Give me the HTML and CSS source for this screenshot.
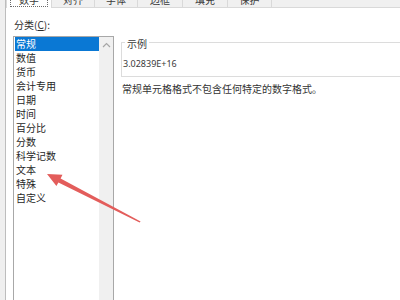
FILE: index.html
```html
<!DOCTYPE html>
<html lang="zh-CN">
<head>
<meta charset="utf-8">
<title>设置单元格格式</title>
<link rel="stylesheet" href="styles.css">
</head>
<body>
<div class="dialog">
  <div class="edge"></div>
  <div class="main">
    <div class="tabs">
      <div class="tab sel w46"><span>数字</span></div>
      <div class="tab w43"><span>对齐</span></div>
      <div class="tab w43"><span>字体</span></div>
      <div class="tab w45"><span>边框</span></div>
      <div class="tab w45"><span>填充</span></div>
      <div class="tab w44"><span>保护</span></div>
      <div class="tabs-fill"></div>
    </div>
    <div class="page">
      <div class="left">
        <div class="label">分类(<u>C</u>):</div>
        <div class="listbox">
          <ul class="items">
            <li class="selected">常规</li>
            <li>数值</li>
            <li>货币</li>
            <li>会计专用</li>
            <li>日期</li>
            <li>时间</li>
            <li>百分比</li>
            <li>分数</li>
            <li>科学记数</li>
            <li>文本</li>
            <li>特殊</li>
            <li>自定义</li>
          </ul>
          <div class="scroll">
            <svg class="chev" width="9" height="6" viewBox="0 0 9 6"><path d="M1 5 L4.5 1.5 L8 5" fill="none" stroke="#a6a6a6" stroke-width="1.2"/></svg>
          </div>
        </div>
      </div>
      <div class="right">
        <fieldset class="sample">
          <legend>示例</legend>
          <div class="value">3.02839E+16</div>
        </fieldset>
        <p class="desc">常规单元格格式不包含任何特定的数字格式。</p>
      </div>
    </div>
  </div>
  <svg class="arrow" width="400" height="300" viewBox="0 0 400 300">
    <polygon points="47,174 62.5,174.8 60.6,178.4 140.6,221.4 139.6,222.6 58.4,182.4 56.4,186" fill="#e35d5b"/>
  </svg>
</div>
</body>
</html>
```

FILE: styles.css
```css
html, body {
  margin: 0;
  padding: 0;
  width: 400px;
  height: 300px;
  overflow: hidden;
  background: #ffffff;
}

.dialog {
  display: flex;
  height: 300px;
  font-family: "Noto Sans CJK SC", "Noto Sans", sans-serif;
  font-size: 10px;
  color: #2b2b2b;
}

.edge {
  width: 5px;
  flex: 0 0 5px;
  background: #efefef;
  border-right: 1px solid #bdbdbd;
}

.main {
  flex: 1;
  display: flex;
  flex-direction: column;
  overflow: hidden;
}

.tabs {
  display: flex;
  height: 8px;
  flex: 0 0 8px;
  overflow: hidden;
  background: #f0f0f0;
}

.tab {
  box-sizing: border-box;
  height: 8px;
  overflow: hidden;
  border-right: 1px solid #d9d9d9;
  border-bottom: 1px solid #d9d9d9;
  text-align: center;
  color: #3a3a3a;
}

.tab span {
  display: block;
  margin-top: -8px;
  line-height: 15px;
}

.tab.sel {
  background: #ffffff;
  border-bottom: none;
  border-left: 1px solid #d9d9d9;
  padding: 0 2px;
}

.tab.sel span {
  margin: -8px 1px 0;
  outline: 1px dotted #6b6b6b;
  outline-offset: -1px;
}

.w46 { width: 46px; }
.w43 { width: 43px; }
.w44 { width: 44px; }
.w45 { width: 45px; }

.tabs-fill {
  flex: 1;
  box-sizing: border-box;
  border-bottom: 1px solid #d9d9d9;
}

.page {
  flex: 1;
  display: flex;
  padding: 10px 0 0 7px;
  background: #ffffff;
}

.left {
  display: flex;
  flex-direction: column;
  width: 101px;
  flex: 0 0 101px;
}

.label {
  line-height: 14px;
  margin: 0 0 4px 1px;
  color: #2b2b2b;
}

.label u {
  text-decoration-thickness: 1px;
  text-underline-offset: 1px;
}

.listbox {
  flex: 1;
  display: flex;
  border: 1px solid #a8a8a8;
  border-bottom: none;
  min-height: 280px;
}

.items {
  list-style: none;
  margin: 0;
  padding: 0 0 0 1px;
  width: 84px;
  flex: 0 0 84px;
}

.items li {
  line-height: 14px;
  height: 14px;
  padding-left: 1px;
  color: #262626;
  white-space: nowrap;
}

.items li.selected {
  background: #0a78d4;
  color: #ffffff;
}

.scroll {
  flex: 1;
  background: #f0f0f0;
  display: flex;
  justify-content: center;
  align-items: flex-start;
  padding-top: 5px;
}

.chev {
  display: block;
}

.right {
  flex: 0 0 300px;
  margin-left: 7px;
  display: flex;
  flex-direction: column;
}

.sample {
  margin: 16px 0 0 0;
  padding: 0 0 5px 1px;
  border: 1px solid #dcdcdc;
  min-width: 0;
}

.sample legend {
  margin-left: 2px;
  padding: 4px 2px 0;
  line-height: 12px;
  color: #3a3a3a;
}

.value {
  padding-top: 7px;
  line-height: 14px;
  font-family: "Noto Sans", "Open Sans", sans-serif;
  font-size: 9px;
  color: #3a3a3a;
}

.desc {
  margin: 5px 0 0 1px;
  line-height: 14px;
  color: #333333;
  white-space: nowrap;
}

.arrow {
  position: absolute;
  left: 0;
  top: 0;
  pointer-events: none;
}
```
